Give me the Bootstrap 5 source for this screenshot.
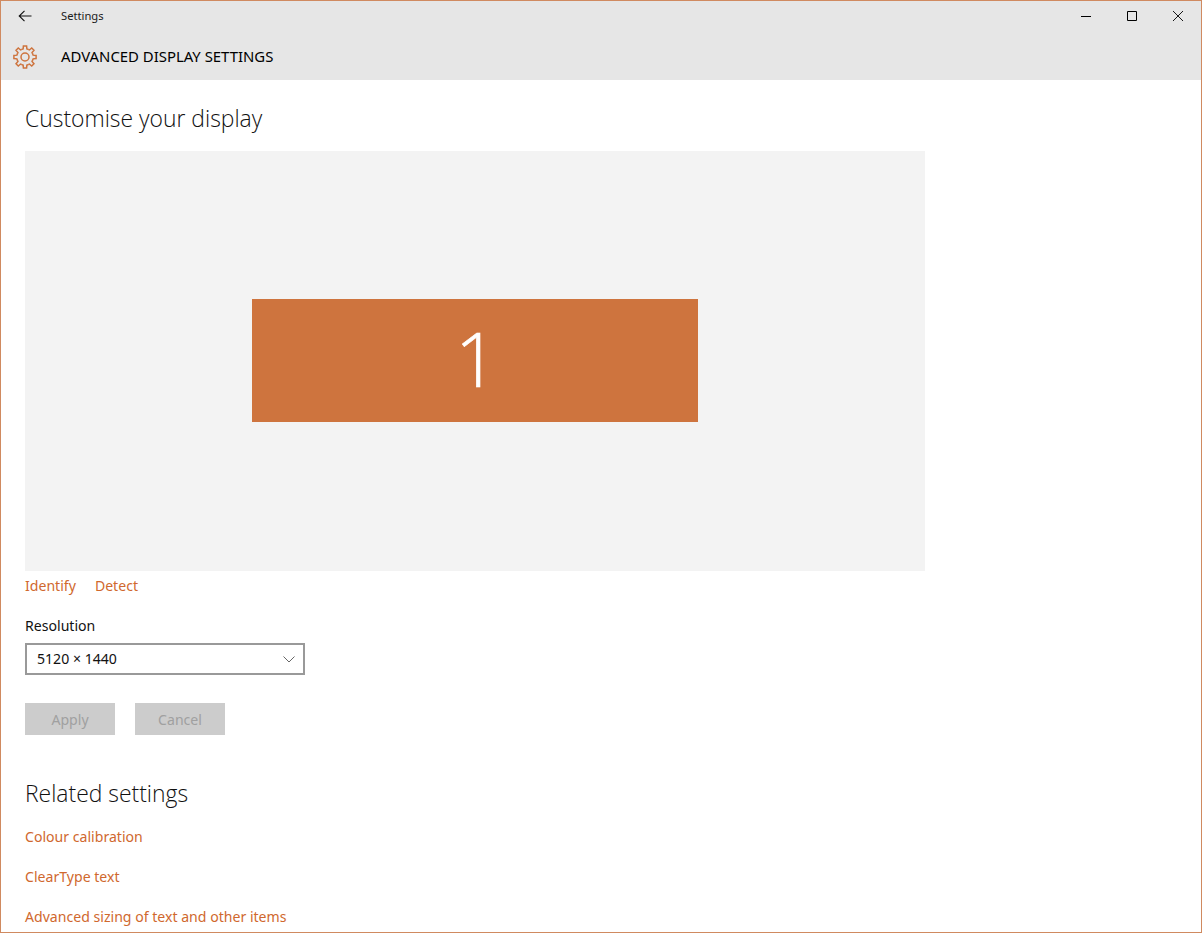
<!DOCTYPE html>
<html lang="en">
<head>
    <meta charset="UTF-8">
    <meta name="viewport" content="width=device-width, initial-scale=1.0">
    <title>Settings</title>
    <link rel="stylesheet" href="https://cdn.jsdelivr.net/npm/bootstrap@5.3.0/dist/css/bootstrap.min.css">
    <style>
        html, body { height: 100%; overflow: hidden; }
        body {
            font-family: "Noto Sans", "Open Sans", sans-serif;
            font-size: 14.1px;
            color: #000;
            background: #fff;
        }
        .win-frame {
            height: 933px;
            border: 1px solid #d08a60;
            overflow: hidden;
        }
        .win-head { background: #e6e6e6; height: 79px; }
        .title-row { height: 29px; }
        .back-btn { width: 48px; }
        .app-title { font-size: 11.2px; margin-left: 12px; padding-top: 2px; color: #1a1a1a; }
        .win-ctrl { width: 46px; }
        .page-row { height: 50px; padding-top: 3px; }
        .gear-slot { width: 48px; padding-left: 0; padding-right: 0; }
        .page-title { font-size: 14.9px; margin-left: 12px; color: #000; }
        .win-body { padding: 0 24px; }
        .sect-title {
            font-family: "Open Sans", sans-serif;
            font-weight: 300;
            font-size: 22.9px;
            line-height: 30px;
            color: #111;
            margin: 0;
        }
        .top-title { padding-top: 24px; height: 71px; }
        .display-canvas { width: 900px; height: 420px; padding-bottom: 1px; background: #f3f3f3; }
        .monitor {
            width: 446px;
            height: 123px;
            padding-left: 3px;
            padding-bottom: 5px;
            background: #ce743e;
            color: #fff;
            font-family: "Open Sans", sans-serif;
            font-weight: 300;
            font-size: 75px;
            line-height: 1;
            -webkit-text-stroke: .6px #fff;
        }
        .accent-link { color: #d0682e; text-decoration: none; line-height: 20px; }
        .link-row { margin-top: 5px; gap: 19px; }
        .res-label { margin-top: 20px; line-height: 20px; color: #111; }
        .res-select {
            width: 280px;
            height: 32px;
            margin-top: 7px;
            border: 2px solid #999;
            padding: 0 8px 0 10px;
            color: #111;
        }
        .action-row { margin-top: 28px; gap: 20px; }
        .btn.action-btn, .btn.action-btn:disabled {
            width: 90px;
            height: 32px;
            padding: 1px 0 0;
            border: 0;
            border-radius: 0;
            background: #ccc;
            color: #a0a0a0;
            opacity: 1;
            font-size: 14.1px;
        }
        .related-title { margin-top: 44px; }
        .related-links { margin-top: 18px; gap: 20px; }
    </style>
</head>
<body>
    <div class="win-frame d-flex flex-column">
        <div class="win-head">
            <div class="title-row d-flex align-items-center">
                <div class="back-btn d-flex justify-content-center">
                    <svg width="14" height="12" viewBox="0 0 14 12" fill="none" stroke="#111" stroke-width="1.1">
                        <path d="M1.500 6H13.500M6.500 .8 1.200 6l5.300 5.200"/>
                    </svg>
                </div>
                <span class="app-title">Settings</span>
                <div class="ms-auto d-flex">
                    <div class="win-ctrl d-flex justify-content-center align-items-center">
                        <svg width="10" height="10" viewBox="0 0 10 10" stroke="#000"><path d="M0 5.500H10"/></svg>
                    </div>
                    <div class="win-ctrl d-flex justify-content-center align-items-center">
                        <svg width="10" height="10" viewBox="0 0 10 10" fill="none" stroke="#000"><path d="M.5.5h9v9h-9z"/></svg>
                    </div>
                    <div class="win-ctrl d-flex justify-content-center align-items-center">
                        <svg width="10" height="10" viewBox="0 0 10 10" stroke="#000" stroke-width=".9"><path d="M0 0 10 10M10 0 0 10"/></svg>
                    </div>
                </div>
            </div>
            <div class="page-row d-flex align-items-center">
                <div class="gear-slot d-flex justify-content-center">
                    <svg width="24" height="24" viewBox="0 0 24 24" fill="none" stroke="#ce743e" stroke-width="1.5">
                        <defs>
                            <path id="tooth" d="M8.820 4.330 10.130 3.910 10.400 .9H13.600L13.870 3.910 15.180 4.330"/>
                        </defs>
                        <use href="#tooth"/>
                        <use href="#tooth" transform="rotate(45 12 12)"/>
                        <use href="#tooth" transform="rotate(90 12 12)"/>
                        <use href="#tooth" transform="rotate(135 12 12)"/>
                        <use href="#tooth" transform="rotate(180 12 12)"/>
                        <use href="#tooth" transform="rotate(225 12 12)"/>
                        <use href="#tooth" transform="rotate(270 12 12)"/>
                        <use href="#tooth" transform="rotate(315 12 12)"/>
                        <circle cx="12" cy="12" r="4"/>
                    </svg>
                </div>
                <span class="page-title">ADVANCED DISPLAY SETTINGS</span>
            </div>
        </div>

        <div class="win-body">
            <h2 class="sect-title top-title">Customise your display</h2>
            <div class="display-canvas d-flex justify-content-center align-items-center">
                <div class="monitor d-flex justify-content-center align-items-center">1</div>
            </div>
            <div class="link-row d-flex">
                <a href="#" class="accent-link">Identify</a>
                <a href="#" class="accent-link">Detect</a>
            </div>
            <div class="res-label">Resolution</div>
            <div class="res-select d-flex align-items-center justify-content-between">
                <span>5120 × 1440</span>
                <svg width="12" height="7" viewBox="0 0 12 7" fill="none" stroke="#666"><path d="M.5.5 6 6l5.500-5.500"/></svg>
            </div>
            <div class="action-row d-flex">
                <button class="btn action-btn" disabled>Apply</button>
                <button class="btn action-btn" disabled>Cancel</button>
            </div>
            <h2 class="sect-title related-title">Related settings</h2>
            <div class="related-links d-flex flex-column align-items-start">
                <a href="#" class="accent-link">Colour calibration</a>
                <a href="#" class="accent-link">ClearType text</a>
                <a href="#" class="accent-link">Advanced sizing of text and other items</a>
            </div>
        </div>
    </div>
    <script src="https://cdn.jsdelivr.net/npm/bootstrap@5.3.0/dist/js/bootstrap.bundle.min.js"></script>
</body>
</html>
